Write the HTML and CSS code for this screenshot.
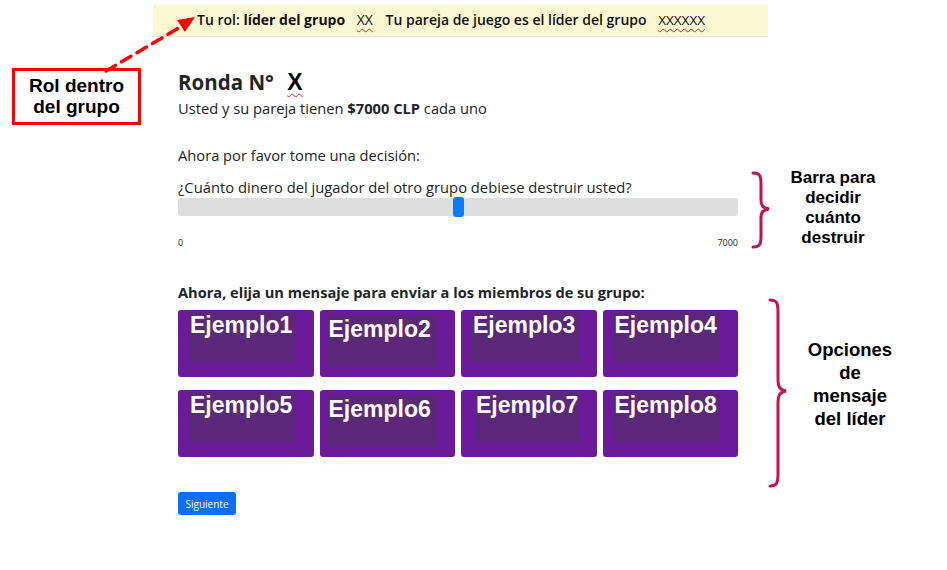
FILE: index.html
```html
<!DOCTYPE html>
<html lang="es">
<head>
<meta charset="utf-8">
<title>Ronda</title>
<link rel="stylesheet" href="styles.css">
</head>
<body>
<div class="banner">
  <span class="lbl">Tu rol:</span> <b class="role">líder del grupo</b>
  <span class="wavy ph">XX</span>
  <span class="partner">Tu pareja de juego es el líder del grupo</span>
  <span class="wavy ph2">XXXXXX</span>
</div>

<main class="main">
  <h2 class="title">Ronda N° <span class="wavy bigx">X</span></h2>
  <p class="lead">Usted y su pareja tienen <b>$7000 CLP</b> cada uno</p>

  <p class="ask">Ahora por favor tome una decisión:</p>
  <p class="question">¿Cuánto dinero del jugador del otro grupo debiese destruir usted?</p>
  <div class="slider">
    <div class="thumb" style="left: calc(50% - 5px)"></div>
  </div>
  <div class="ticks"><span>0</span><span>7000</span></div>

  <p class="msg-head">Ahora, elija un mensaje para enviar a los miembros de su grupo:</p>
  <div class="cards">
    <div class="card"><div class="inner">Ejemplo1</div></div>
    <div class="card"><div class="inner down">Ejemplo2</div></div>
    <div class="card"><div class="inner">Ejemplo3</div></div>
    <div class="card"><div class="inner">Ejemplo4</div></div>
    <div class="card"><div class="inner">Ejemplo5</div></div>
    <div class="card"><div class="inner down">Ejemplo6</div></div>
    <div class="card"><div class="inner wide">Ejemplo7</div></div>
    <div class="card"><div class="inner">Ejemplo8</div></div>
  </div>

  <button class="next">Siguiente</button>
</main>

<div class="note note-rol">Rol dentro<br>del grupo</div>
<svg class="arrow" width="110" height="70" viewBox="0 0 110 70">
  <line x1="8" y1="63" x2="84" y2="18" stroke="#ff0000" stroke-width="3.5" stroke-dasharray="11 7" stroke-linecap="round"/>
  <polygon points="97,9 79,12 87,24" fill="#ff0000"/>
</svg>

<svg class="brace brace1" width="30" height="80" viewBox="0 0 30 80">
  <path d="M3 3 C10 3 11 6 11 14 L11 30 C11 36 13 38 19 39 C13 40 11 42 11 48 L11 66 C11 74 10 77 3 77" fill="none" stroke="#c2134f" stroke-width="3" stroke-linecap="round"/>
</svg>
<div class="note note-bar">Barra para<br>decidir<br>cuánto<br>destruir</div>

<svg class="brace brace2" width="30" height="192" viewBox="0 0 30 192">
  <path d="M3 3 C10 3 11 6 11 16 L11 82 C11 90 13 93 19 94 C13 95 11 98 11 106 L11 176 C11 186 10 189 3 189" fill="none" stroke="#c2134f" stroke-width="3" stroke-linecap="round"/>
</svg>
<div class="note note-msg">Opciones<br>de<br>mensaje<br>del líder</div>
</body>
</html>
```

FILE: styles.css
```css
* { box-sizing: border-box; }
html, body { margin: 0; padding: 0; background: #fff; }
body {
  font-family: "Open Sans", "Noto Sans", sans-serif;
  color: #212529;
  width: 947px;
  height: 570px;
  position: relative;
  overflow: hidden;
}

.banner {
  margin: 5px 0 0 153px;
  width: 615px;
  height: 32px;
  background: #fcf8d2;
  border-bottom: 1px solid #e6e4d6;
  padding: 5px 0 0 44px;
  font-size: 14px;
  color: #111;
  white-space: nowrap;
}
.banner .lbl { font-weight: 600; }
.banner .role { font-weight: 700; font-size: 14px; }
.banner .partner { font-weight: 600; margin-left: 9px; }
.wavy {
  text-decoration: underline wavy #e0201f;
  text-decoration-thickness: 1px;
  text-underline-offset: 3px;
}
.banner .ph { margin-left: 8px; font-weight: 500; font-size: 14px; }
.banner .ph2 { margin-left: 8px; font-weight: 500; font-size: 13.5px; }

.main {
  margin-left: 178px;
  width: 560px;
  padding-top: 32px;
}
.title {
  margin: 0;
  font-size: 20.5px;
  font-weight: 700;
  line-height: 26px;
  color: #212529;
}
.bigx {
  font-family: "Liberation Sans", Arial, sans-serif;
  font-size: 23px;
  margin-left: 8px;
  color: #000;
}
.lead {
  margin: 3px 0 0;
  font-size: 14.7px;
  line-height: 20px;
}
.lead b { font-weight: 700; }
.ask {
  margin: 27px 0 0;
  font-size: 14.7px;
  line-height: 20px;
}
.question {
  margin: 12px 0 0;
  font-size: 14.75px;
  line-height: 20px;
}
.slider {
  position: relative;
  margin-top: 1px;
  height: 18px;
  background: #dedede;
  border-radius: 3px;
}
.thumb {
  position: absolute;
  top: -1px;
  width: 11px;
  height: 20px;
  background: #0a7bff;
  border-radius: 3px;
}
.ticks {
  display: flex;
  justify-content: space-between;
  margin-top: 21px;
  font-size: 9px;
  line-height: 12px;
  color: #222;
}
.msg-head {
  margin: 33px 0 0;
  font-size: 14.6px;
  font-weight: 700;
  line-height: 20px;
}
.cards {
  margin-top: 8px;
  display: grid;
  grid-template-columns: repeat(4, 1fr);
  column-gap: 6px;
  row-gap: 13px;
}
.card {
  height: 67px;
  background: #6b1b99;
  border-radius: 3px;
  padding: 2px 18px 13px 11px;
}
.inner {
  height: 50px;
  background: #5b2879;
  color: #fff;
  font-family: "Liberation Sans", Arial, sans-serif;
  font-weight: 700;
  font-size: 23px;
  line-height: 26px;
  padding-left: 1px;
  white-space: nowrap;
}
.inner.down { margin: 4px 0 0 -3px; height: 50px; line-height: 26px; }
.inner.wide { margin-left: 3px; }

.next {
  margin-top: 35px;
  display: block;
  width: 58px;
  height: 23px;
  border: none;
  border-radius: 3px;
  background: #0d6efd;
  color: #fff;
  font-family: "Open Sans", "Noto Sans", sans-serif;
  font-size: 10px;
  padding: 0;
}

.note {
  position: absolute;
  font-family: "Liberation Sans", Arial, sans-serif;
  font-weight: 700;
  color: #000;
  text-align: center;
}
.note-rol {
  left: 12px;
  top: 68px;
  width: 129px;
  height: 57px;
  border: 3px solid #ff0000;
  font-size: 19px;
  line-height: 21px;
  padding-top: 4px;
}
.note-bar {
  left: 773px;
  top: 168px;
  width: 120px;
  font-size: 17px;
  line-height: 20px;
}
.note-msg {
  left: 790px;
  top: 338px;
  width: 120px;
  font-size: 18.5px;
  line-height: 23px;
}
.arrow { position: absolute; left: 98px; top: 8px; }
.brace { position: absolute; }
.brace1 { left: 750px; top: 170px; }
.brace2 { left: 767px; top: 297px; }
```
